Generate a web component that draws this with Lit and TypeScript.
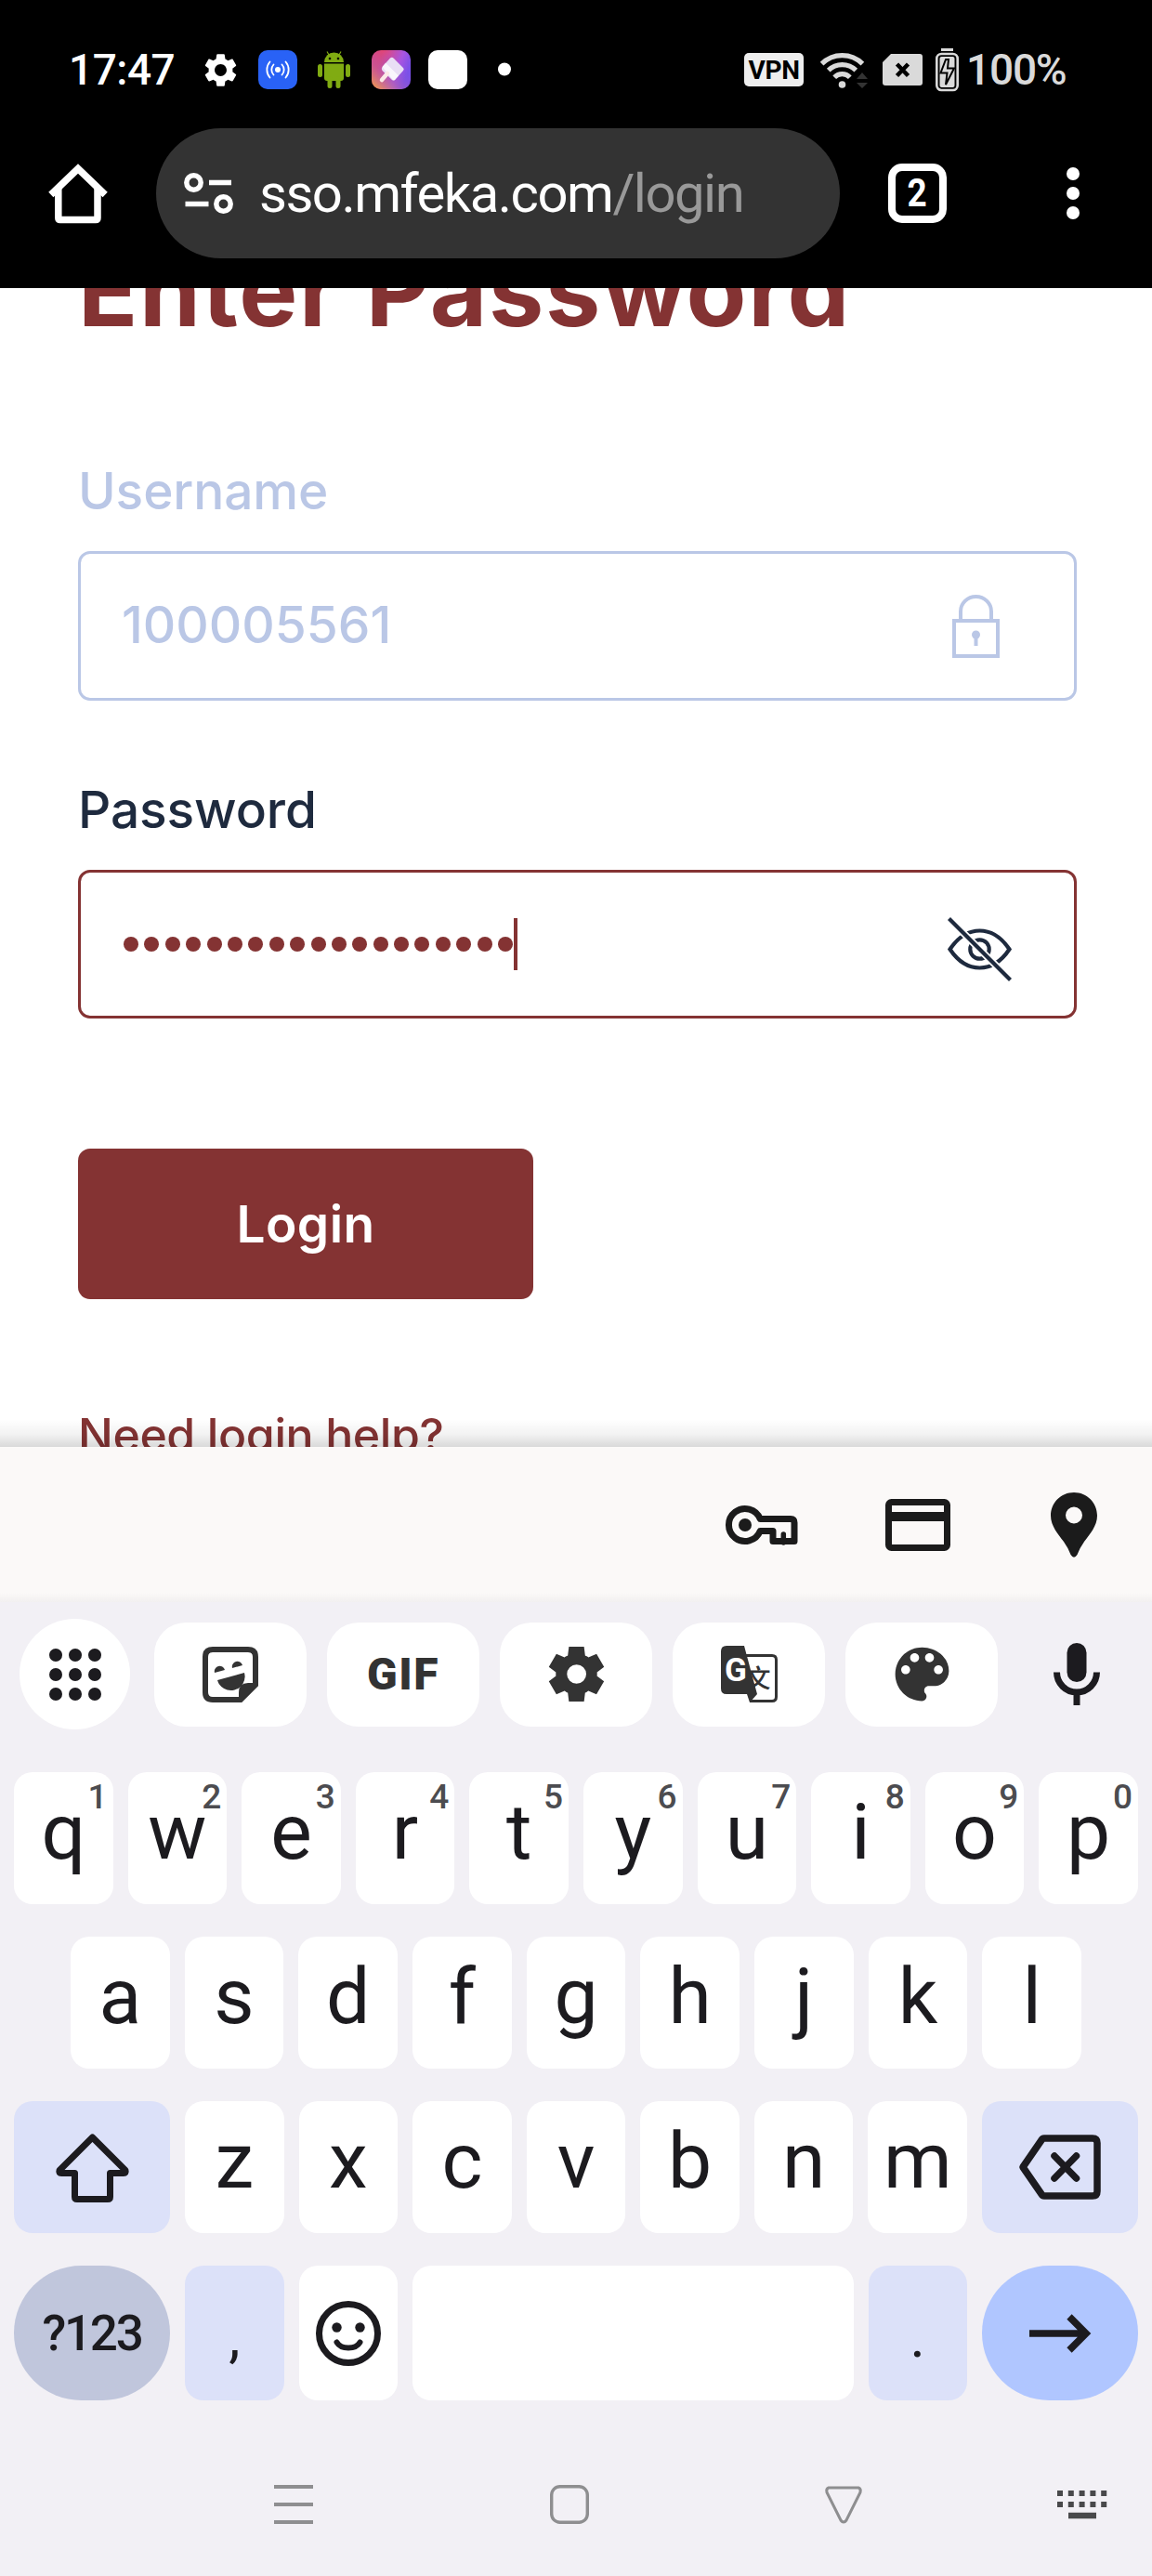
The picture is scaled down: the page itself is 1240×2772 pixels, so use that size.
import { LitElement, html, css, svg, nothing } from "lit";
import { customElement } from "lit/decorators.js";

const gearRound =
  "M19.14 12.94c.04-.3.06-.61.06-.94 0-.32-.02-.64-.07-.94l2.03-1.58c.18-.14.23-.41.12-.61l-1.92-3.32c-.12-.22-.37-.29-.59-.22l-2.39.96c-.5-.38-1.03-.7-1.62-.94l-.36-2.54c-.04-.24-.24-.41-.48-.41h-3.84c-.24 0-.43.17-.47.41l-.36 2.54c-.59.24-1.13.57-1.62.94l-2.39-.96c-.22-.08-.47 0-.59.22L2.74 8.87c-.12.21-.08.47.12.61l2.03 1.58c-.05.3-.09.63-.09.94s.02.64.07.94l-2.03 1.58c-.18.14-.23.41-.12.61l1.92 3.32c.12.22.37.29.59.22l2.39-.96c.5.38 1.03.7 1.62.94l.36 2.54c.05.24.24.41.48.41h3.84c.24 0 .44-.17.47-.41l.36-2.54c.59-.24 1.13-.56 1.62-.94l2.39.96c.22.08.47 0 .59-.22l1.92-3.32c.12-.22.07-.47-.12-.61l-2.01-1.58zM12 15.6c-1.98 0-3.6-1.62-3.6-3.6s1.62-3.6 3.6-3.6 3.6 1.62 3.6 3.6-1.62 3.6-3.6 3.6z";
const gearSharp =
  "m370-80-16-128q-13-5-24.5-12T307-235l-119 50L78-375l103-78q-1-7-1-13.5v-27q0-6.5 1-13.5L78-585l110-190 119 50q11-8 23-15t24-12l16-128h220l16 128q13 5 24.5 12t22.5 15l119-50 110 190-103 78q1 7 1 13.5v27q0 6.5-2 13.5l103 78-110 190-118-50q-11 8-23 15t-24 12L590-80H370Zm112-260q58 0 99-41t41-99q0-58-41-99t-99-41q-59 0-99.5 41T342-480q0 58 40.500 99t99.500 41Z";
const palette =
  "M12 3c-4.97 0-9 4.03-9 9s4.03 9 9 9c.83 0 1.5-.67 1.5-1.5 0-.39-.15-.74-.39-1.01-.23-.26-.38-.61-.38-.99 0-.83.67-1.5 1.5-1.5H16c2.76 0 5-2.24 5-5 0-4.42-4.03-8-9-8zm-5.5 9c-.83 0-1.5-.67-1.5-1.5S5.67 9 6.5 9 8 9.67 8 10.5 7.33 12 6.5 12zm3-4C8.67 8 8 7.33 8 6.5S8.67 5 9.5 5s1.5.67 1.5 1.5S10.33 8 9.5 8zm5 0c-.83 0-1.5-.67-1.5-1.5S13.67 5 14.5 5s1.5.67 1.5 1.5S15.33 8 14.5 8zm3 4c-.83 0-1.5-.67-1.5-1.5S16.67 9 17.5 9s1.5.67 1.5 1.5-.67 1.5-1.5 1.5z";

/** Wraps icon content in an svg of a given size. */
const icon = (w: number, h: number, body: unknown, box = `0 0 ${w} ${h}`) =>
  html`<svg width=${w} height=${h} viewBox=${box} fill="none" aria-hidden="true">${body}</svg>`;

const base = css`
  :host { display: block; }
  * { box-sizing: border-box; margin: 0; }
  svg { display: block; flex: none; overflow: visible; }
`;

@customElement("status-bar")
export class StatusBar extends LitElement {
  static styles = [base, css`
    .bar { display: flex; align-items: center; height: 138px; padding-top: 12px; background: #000; color: #fff; font: 400 46px/54px Roboto, sans-serif; }
    .left { display: flex; align-items: center; width: 801px; padding-left: 74px; }
    .time { width: 133px; font-weight: 500; letter-spacing: -0.5px; }
    .slot { width: 61px; display: flex; justify-content: center; }
    .right { display: flex; align-items: center; color: #dadada; }
    .vpn { width: 64px; height: 36px; border-radius: 5px; background: #eee; color: #000; text-align: center; font: 700 28px/37px Roboto, sans-serif; letter-spacing: -0.3px; margin-right: 18px; }
    .wifi { margin-right: 16px; }
    .sim { margin-right: 14px; }
    .batt { margin-right: 8px; }
    .pct { font-weight: 500; letter-spacing: -1.2px; }
  `];

  render() {
    return html`
      <div class="bar">
        <div class="left">
          <span class="time">17:47</span>
          <span class="slot">${icon(43, 43, svg`<path fill="#fff" d=${gearRound} />`, "0 0 24 24")}</span>
          <span class="slot">${icon(42, 42, svg`
            <rect width="42" height="42" rx="10" fill="#2962f6" />
            <circle cx="21" cy="21" r="3" fill="#fff" />
            <g stroke="#fff" stroke-width="1.8" stroke-linecap="round">
              <path d="M16.5 15.5a8 8 0 0 0 0 11M25.500 15.500a8 8 0 0 1 0 11" />
              <path d="M12.500 12.500a13 13 0 0 0 0 17M29.500 12.500a13 13 0 0 1 0 17" />
            </g>`)}</span>
          <span class="slot">${icon(35, 40, svg`
            <g fill="#80ab12">
              <path d="M7 12a10.500 10.500 0 0 1 21 0Z" />
              <path d="M7 13.500h21v15.500q0 3-3 3H10q-3 0-3-3Z" />
              <rect x="0" y="14" width="5" height="14" rx="2.500" />
              <rect x="30" y="14" width="5" height="14" rx="2.500" />
              <rect x="10.500" y="27" width="5" height="13" rx="2.500" />
              <rect x="19.500" y="27" width="5" height="13" rx="2.500" />
            </g>
            <path d="M12 4 10 .5M23 4l2-3.500" stroke="#80ab12" stroke-width="1.200" />
            <circle cx="13" cy="8" r="1.300" fill="#000" /><circle cx="22" cy="8" r="1.300" fill="#000" />`)}</span>
          <span class="slot">${icon(42, 42, svg`
            <defs>
              <linearGradient id="g" x1="0" y1="0" x2="1" y2=".35">
                <stop offset=".25" stop-color="#e8456f" /><stop offset=".75" stop-color="#a855e0" /><stop offset="1" stop-color="#7a50e8" />
              </linearGradient>
              <linearGradient id="h" x1=".1" y1="1" x2=".7" y2=".3">
                <stop offset="0" stop-color="#f0994f" /><stop offset=".5" stop-color="#b05fb0" stop-opacity=".5" /><stop offset="1" stop-color="#7a50e8" stop-opacity="0" />
              </linearGradient>
            </defs>
            <rect width="42" height="42" rx="10" fill="url(#g)" />
            <rect width="42" height="42" rx="10" fill="url(#h)" />
            <path d="M20 8.500q2-1.500 4 .5l10 10q1.500 1.500 0 3L25 32q-1.500 1-3 0L11.500 22q-1.500-2 0-4Z" fill="#e9dff5" />
            <path d="M11.500 18 23 32q1 .5 2 0l4-4.500L15 13.500Z" fill="#fff" opacity=".7" />
            <path d="m17 25-6 7" stroke="#fbe9e6" stroke-width="4.500" stroke-linecap="round" />`)}</span>
          <span class="slot">${icon(42, 42, svg`<rect width="42" height="42" rx="10" fill="#fff" />`)}</span>
          <span class="slot">${icon(14, 14, svg`<circle cx="7" cy="6.500" r="7" fill="#fff" />`)}</span>
        </div>
        <div class="right">
          <span class="vpn">VPN</span>
          <span class="wifi">${icon(51, 40, svg`
            <g stroke="#dadada" stroke-width="5.200">
              <path d="M1.600 13.600A31 31 0 0 1 45.400 13.600M8.700 20.700A21 21 0 0 1 38.300 20.700M15.200 28.200A11.500 11.500 0 0 1 31.800 28.200" />
            </g>
            <circle cx="23.500" cy="36" r="3.800" fill="#dadada" />
            <path d="m45 23 6 7H39ZM45 40l6-6H39Z" fill="#333" />`)}</span>
          <span class="sim">${icon(43, 34, svg`
            <path d="M9 0H40q3 0 3 3V31q0 3-3 3H3q-3 0-3-3V9Z" fill="#dadada" />
            <path d="m15.500 11 12 12.500m0-12.500-12 12.500" stroke="#000" stroke-width="4.500" />`)}</span>
          <span class="batt">${icon(25, 46, svg`
            <rect x="6" y="0" width="13" height="3" fill="#dadada" />
            <rect x="1.300" y="6" width="22.400" height="39" rx="5" stroke="#dadada" stroke-width="2.600" />
            <rect x="4.500" y="9" width="16" height="33" rx="2" fill="#dadada" />
            <path d="M11 12 5.500 26.500h7L11 39l9-17.500h-7L14 12Z" fill="#dadada" stroke="#000" stroke-width="2" />`)}</span>
          <span class="pct">100%</span>
        </div>
      </div>`;
  }
}

@customElement("browser-bar")
export class BrowserBar extends LitElement {
  static styles = [base, css`
    .bar { height: 172px; padding: 0 0 32px 52px; display: flex; align-items: center; background: #000; }
    .url { display: flex; align-items: center; gap: 28px; width: 736px; height: 140px; margin: 0 52px 0 52px; padding-left: 30px; border-radius: 70px; background: #333; color: #fff; font: 400 58px/70px Roboto, sans-serif; letter-spacing: -1.5px; }
    .path { color: #999; }
    .tabs { display: flex; justify-content: center; width: 63px; height: 64px; margin-right: 129px; border: 8px solid #fff; border-radius: 15px; color: #fff; font: 700 42px/48px Roboto, sans-serif; }
    .count { transform: scaleX(.88); }
  `];

  render() {
    return html`
      <div class="bar">
        ${icon(64, 64, svg`<g stroke="#fff" stroke-width="7.500" stroke-linejoin="round">
          <path d="M10.800 24V58.500q0 2 2 2H51q2 0 2-2V24" /><path stroke-linejoin="miter" d="M2.800 33.500 32 5.500 61.200 33.500" /></g>`)}
        <div class="url">
          ${icon(53, 44, svg`<g stroke="#fff" stroke-width="5.500">
            <circle cx="10.500" cy="10.500" r="7.700" /><circle cx="42.500" cy="33.500" r="7.700" />
            <path d="M27 10.500H51M1.500 33.500H26.500" /></g>`)}
          <span>sso.mfeka.com<span class="path">/login</span></span>
        </div>
        <div class="tabs"><span class="count">2</span></div>
        ${icon(14, 56, svg`<g fill="#fff"><circle cx="7" cy="7" r="7" /><circle cx="7" cy="28" r="7" /><circle cx="7" cy="49" r="7" /></g>`)}
      </div>`;
  }
}

@customElement("login-page")
export class LoginPage extends LitElement {
  static styles = [base, css`
    .page { position: relative; height: 1247px; overflow: hidden; padding-left: 84px; background: #fff; color: #843333; font: 500 55px/66px Inter, sans-serif; }
    .title { margin-top: -57px; font-size: 106px; line-height: 120px; font-weight: 700; letter-spacing: 1.7px; white-space: nowrap; }
    .label { margin-top: 122px; color: #bac7e6; letter-spacing: -0.1px; }
    .label.pw { margin-top: 84px; color: #1e2a3e; }
    .field { display: flex; align-items: center; justify-content: space-between; width: 1075px; height: 161px; margin-top: 32px; border: 3px solid #bac7e6; border-radius: 13px; padding: 0 80px 3px 44px; color: #bac7e6; }
    .field.pw { height: 160px; border-color: #843333; padding: 0 67px 0 46px; }
    .lock { margin-top: 4px; }
    .dots { display: flex; align-items: center; gap: 6.400px; }
    .dot { width: 16px; height: 16px; border-radius: 8px; background: #843333; }
    .caret { width: 4px; height: 56px; margin-left: -5px; background: #843333; }
    .eye { margin-top: 11px; }
    .btn { display: block; width: 490px; height: 162px; margin-top: 140px; border: 0; border-radius: 13px; padding: 0; background: #843333; color: #fff; font: 600 55px/66px Inter, sans-serif; letter-spacing: 0.4px; }
    .help { display: block; margin-top: 116px; font-size: 50px; line-height: 60px; letter-spacing: -0.4px; }
    .shade { position: absolute; left: 0; right: 0; bottom: 0; height: 30px; background: linear-gradient(rgba(0,0,0,0), rgba(0,0,0,.05) 55%, rgba(0,0,0,.15)); }
  `];

  render() {
    return html`
      <div class="page">
        <h1 class="title">Enter Password</h1>
        <div class="label">Username</div>
        <div class="field">
          <span>100005561</span>
          <span class="lock">${icon(51, 68, svg`<g stroke="#bac7e6" stroke-width="4">
            <rect x="2" y="28" width="47" height="38" /><path d="M9 26V18a16.500 16 0 0 1 33 0V26" /></g>
            <circle cx="25.500" cy="43" r="4.500" fill="#bac7e6" /><path d="M25.500 44V55" stroke="#bac7e6" stroke-width="4" />`)}</span>
        </div>
        <div class="label pw">Password</div>
        <div class="field pw">
          <div class="dots">${Array.from({ length: 19 }, () => html`<span class="dot"></span>`)}<span class="caret"></span></div>
          <span class="eye">${icon(69, 69, svg`
            <g stroke="#1e2a3e" stroke-width="4.200">
              <path d="M2.500 34.500Q16 14.500 34.500 14.500T66.500 34.500Q53 54.500 34.500 54.500T2.500 34.500Z" />
              <circle cx="34.500" cy="34.500" r="10.200" /></g>
            <path d="M8 5 64 61M5 8 61 64" stroke="#fff" stroke-width="3.500" />
            <path d="M1.500 1.500 67.500 67.500" stroke="#1e2a3e" stroke-width="4.200" />`)}</span>
        </div>
        <button class="btn">Login</button>
        <a class="help">Need login help?</a>
        <div class="shade"></div>
      </div>`;
  }
}

@customElement("soft-keyboard")
export class SoftKeyboard extends LitElement {
  static styles = [base, css`
    .fill { display: flex; align-items: center; gap: 94px; height: 167px; padding: 1px 0 0 781px; background: linear-gradient(#fbf9f8 94%, #f2f0f0); }
    .fill .card { margin-right: 14px; }
    .kb { height: 1048px; padding: 18px 15px 0; background: #f2f0f5; color: #1c1b1f; font-family: Roboto, sans-serif; }
    .tools { display: flex; align-items: center; gap: 22px; height: 119px; padding-left: 6px; margin-bottom: 46px; }
    .round { display: flex; align-items: center; justify-content: center; width: 119px; height: 119px; margin-right: 4px; border-radius: 50%; background: #fff; }
    .tool { display: flex; align-items: center; justify-content: center; width: 164px; height: 112px; border-radius: 34px; background: #fff; color: #333; font: 900 48px/50px Roboto, sans-serif; letter-spacing: 1.500px; }
    .mic { margin-left: 38px; }
    .row { display: flex; gap: 16px; margin-bottom: 35px; }
    .row.mid { padding: 0 61px; }
    .key { position: relative; display: flex; align-items: center; justify-content: center; flex: 1 1 0; height: 142px; padding-bottom: 13px; border-radius: 20px; background: #fff; font-size: 84px; line-height: 96px; }
    .key.icon { padding: 0; }
    .key.wide { flex: none; width: 168px; }
    .key.tint { background: #dce1f9; }
    .last .key { height: 145px; padding: 0; }
    .last .key.sq { flex: none; width: 106.500px; }
    .last .key.sym { border-radius: 73px; background: #c0c6dc; font-size: 53px; font-weight: 500; letter-spacing: -2.300px; }
    .last .key.go { border-radius: 73px; background: #b0c6ff; }
    .last .key.punct { font-size: 62px; padding-top: 9px; }
    .hint { position: absolute; top: 9px; right: 6px; font: 500 37px/36px Roboto, sans-serif; color: #4c4c50; }
    .nav { display: flex; align-items: center; height: 154px; padding-left: 280px; }
    .n2 { margin-left: 255px; }
    .n3 { margin-left: 254px; }
    .n4 { margin-left: 210px; }
  `];

  private key(ch: string, hint?: string) {
    return html`<div class="key">${ch}${hint ? html`<span class="hint">${hint}</span>` : nothing}</div>`;
  }

  render() {
    const ink = "#1c1b1f";
    return html`
      <div class="fill">
        ${icon(78, 42, svg`<g stroke="#1b1b1b" stroke-width="7">
          <path stroke-linejoin="round" d="M37.200 14.500H70q4 0 4 4V38.500H51V27.500H37.200A17.500 17.500 0 1 1 37.200 14.500Z" /></g>
          <circle cx="21" cy="21" r="7" fill="#1b1b1b" /><path d="M62.300 40V31" stroke="#1b1b1b" stroke-width="5.500" stroke-linecap="round" />`)}
        <span class="card">${icon(70, 56, svg`<rect x="3.500" y="3.500" width="63" height="49" rx="3" stroke="#1b1b1b" stroke-width="7" /><path d="M3 19H67" stroke="#1b1b1b" stroke-width="10" />`)}</span>
        ${icon(50, 70, svg`<path fill="#1b1b1b" fill-rule="evenodd" d="M25 0C11 0 0 11 0 25C0 36 8 45 14 53Q19 60 21.500 67Q25 72.500 28.500 67Q31 60 36 53C42 45 50 36 50 25C50 11 39 0 25 0ZM25 15.500a9 9 0 1 1 0 18a9 9 0 1 1 0-18Z" />`)}
      </div>
      <div class="kb">
        <div class="tools">
          <div class="round">${icon(56, 56, svg`<g fill=${ink}>${[7, 28, 49].map((y) => [7, 28, 49].map((x) => svg`<circle cx=${x} cy=${y} r="7" />`))}</g>`)}</div>
          <div class="tool">${icon(60, 60, svg`
            <path stroke="#333" stroke-width="6" d="M11 3H49Q57 3 57 11V41L41 57H11Q3 57 3 49V11Q3 3 11 3Z" />
            <g fill="#333"><path d="M39 58V49Q39 39 49 39H58V42L42 58Z" />
            <path d="M16 36 45 28A15 15 0 0 1 16 36Z" />
            <path d="M13 28 24 25A5.600 5.600 0 1 0 13 28ZM32 23 43 20A5.600 5.600 0 1 0 32 23Z" /></g>`)}</div>
          <div class="tool">GIF</div>
          <div class="tool">${icon(71, 71, svg`<path fill="#333" d=${gearSharp} />`, "0 -960 960 960")}</div>
          <div class="tool">${icon(61, 61, svg`
            <path d="M26 10.500H55q4.500 0 4.500 4.500V55q0 4.500-4.500 4.500H31" stroke="#333" stroke-width="3" />
            <text x="40" y="45" text-anchor="middle" font-family="Noto Sans CJK SC, sans-serif" font-size="27" font-weight="500" letter-spacing="0" fill="#333">文</text>
            <path d="M6 0H25L39 52 31 61 28 52H6Q0 52 0 46V6Q0 0 6 0Z" fill="#333" />
            <text x="16" y="38" text-anchor="middle" font-family="Roboto, sans-serif" font-size="35" font-weight="700" letter-spacing="0" fill="#fff">G</text>`)}</div>
          <div class="tool">${icon(77, 77, svg`<path fill="#333" d=${palette} />`, "0 0 24 24")}</div>
          <span class="mic">${icon(50, 67, svg`
            <rect x="14.500" y="0" width="21" height="42" rx="10.500" fill=${ink} />
            <path d="M3.500 31.500a21.500 21.500 0 0 0 43 0M25 53V67" stroke=${ink} stroke-width="7" />`)}</span>
        </div>
        <div class="row">${[..."qwertyuiop"].map((c, i) => this.key(c, String((i + 1) % 10)))}</div>
        <div class="row mid">${[..."asdfghjkl"].map((c) => this.key(c))}</div>
        <div class="row">
          <div class="key icon wide tint">${icon(79, 75, svg`<path stroke=${ink} stroke-width="7" stroke-linejoin="round" d="M39.500 5 75 40.500Q76 43.500 73 43.500H58.500V69Q58.500 71.500 56 71.500H23Q20.500 71.500 20.500 69V43.500H6Q3 43.500 4 40.500Z" />`)}</div>
          ${[..."zxcvbnm"].map((c) => this.key(c))}
          <div class="key icon wide tint">${icon(88, 70, svg`<g stroke=${ink} stroke-width="7.500" stroke-linejoin="round" stroke-linecap="round">
            <path d="M27 4H79Q84 4 84 9V61Q84 66 79 66H27Q25 66 24 64L4 35 24 6Q25 4 27 4Z" />
            <path d="M38 23 61.500 47M61.500 23 38 47" /></g>`)}</div>
        </div>
        <div class="row last">
          <div class="key wide sym">?123</div>
          <div class="key sq tint punct">,</div>
          <div class="key sq">${icon(70, 70, svg`<circle cx="35" cy="35" r="31.500" stroke=${ink} stroke-width="7" />
            <circle cx="22.500" cy="28.500" r="5.200" fill=${ink} /><circle cx="47.500" cy="28.500" r="5.200" fill=${ink} />
            <path d="M22.500 44.500Q26 50.500 35 50.500T47.500 44.500" stroke=${ink} stroke-width="6" stroke-linecap="round" />`)}</div>
          <div class="key"></div>
          <div class="key sq tint punct">.</div>
          <div class="key wide go">${icon(66, 42, svg`<path stroke=${ink} stroke-width="7.500" d="M0 21H60M43 3 61 21 43 39" />`)}</div>
        </div>
        <div class="nav">
          ${icon(42, 42, svg`<path d="M0 2H42M0 21H42M0 40H42" stroke="#8e8e90" stroke-width="3.800" />`)}
          <span class="n2">${icon(42, 42, svg`<rect x="1.700" y="1.700" width="38.600" height="38.600" rx="9" stroke="#8e8e90" stroke-width="3.400" />`)}</span>
          <span class="n3">${icon(40, 41, svg`<path d="M4 2H36Q39 3 38 7L23 37Q20 41 17 37L2 7Q1 3 4 2Z" stroke="#8e8e90" stroke-width="3" />`)}</span>
          <span class="n4">${icon(54, 30, svg`<path d="M0 3H54M0 15H54" stroke="#49494b" stroke-width="6" stroke-dasharray="6 5.800" /><path d="M12 27H42" stroke="#49494b" stroke-width="6.500" />`)}</span>
        </div>
      </div>`;
  }
}

@customElement("app-root")
export class AppRoot extends LitElement {
  static styles = css`
    :host { display: flex; flex-direction: column; width: 1240px; height: 2772px; overflow: hidden; }
  `;

  render() {
    return html`
      <status-bar></status-bar>
      <browser-bar></browser-bar>
      <login-page></login-page>
      <soft-keyboard></soft-keyboard>`;
  }
}
